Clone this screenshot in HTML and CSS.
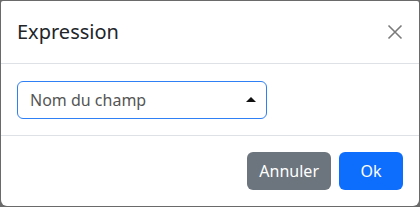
FILE: index.html
```html
<!DOCTYPE html>
<html lang="fr">
<head>
<meta charset="utf-8">
<title>Expression</title>
<link rel="stylesheet" href="styles.css">
</head>
<body>
<div class="modal">
  <div class="modal-header">
    <h5 class="modal-title">Expression</h5>
    <button class="btn-close" type="button" aria-label="Close">
      <svg width="16" height="16" viewBox="0 0 16 16"><path d="M1.5 1.5 L14.5 14.5 M14.5 1.5 L1.5 14.5" stroke="#7a7a7a" stroke-width="1.6" fill="none"/></svg>
    </button>
  </div>
  <div class="modal-body">
    <div class="select">
      <span class="select-text">Nom du champ</span>
      <svg class="caret" width="10" height="5" viewBox="0 0 10 5"><path d="M0 5 L5 0 L10 5 Z" fill="#111"/></svg>
    </div>
  </div>
  <div class="modal-footer">
    <button class="btn btn-secondary" type="button">Annuler</button>
    <button class="btn btn-primary" type="button">Ok</button>
  </div>
</div>
</body>
</html>
```
FILE: styles.css
```css
html, body {
  margin: 0;
  padding: 0;
  background: #6a6a6a;
}
body {
  width: 420px;
  height: 207px;
  padding: 1px 1px 0 1px;
  box-sizing: border-box;
  font-family: "Noto Sans", "Open Sans", sans-serif;
}
.modal {
  background: #fff;
  height: 205px;
  border-radius: 2px 2px 6px 6px;
  display: flex;
  flex-direction: column;
  box-sizing: border-box;
  color: #212529;
}
.modal-header {
  display: flex;
  align-items: center;
  justify-content: space-between;
  padding: 16px;
  height: 63px;
  box-sizing: border-box;
  border-bottom: 1px solid #dee2e6;
}
.modal-title {
  margin: 0;
  font-size: 20px;
  font-weight: 400;
  line-height: 30px;
}
.btn-close {
  border: 0;
  background: transparent;
  padding: 0;
  width: 16px;
  height: 16px;
  display: flex;
}
.modal-body {
  padding: 17px 16px 16px;
  border-bottom: 1px solid #dee2e6;
  height: 72px;
  box-sizing: border-box;
}
.select {
  width: 250px;
  height: 38px;
  box-sizing: border-box;
  border: 1px solid #2f80f5;
  border-radius: 6px;
  display: flex;
  align-items: center;
  justify-content: space-between;
  padding: 0 10px 0 12px;
  font-size: 16px;
  color: #555;
}
.select-text { line-height: 24px; }
.caret { margin-top: -1px; }
.modal-footer {
  display: flex;
  justify-content: flex-end;
  align-items: center;
  padding: 12px;
  flex: 1;
}
.btn {
  margin: 4px;
  height: 38px;
  border: 0;
  border-radius: 6px;
  font-family: inherit;
  font-size: 16px;
  color: #fff;
  padding: 0 12px;
}
.btn-secondary { background: #6c757d; }
.btn-primary { background: #0d6efd; min-width: 64px; }
```
